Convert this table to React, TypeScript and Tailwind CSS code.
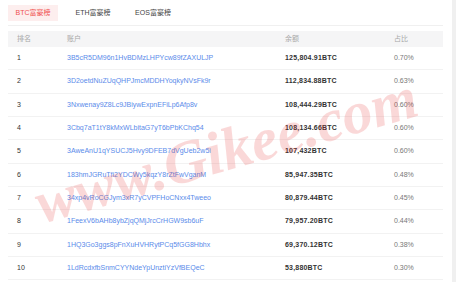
import clsx from "clsx";

const cn = clsx;

const rows = [
    { rank: 1, addr: "3B5cR5DM96n1HvBDMzLHPYcw89fZAXULJP", bal: "125,804.91BTC", pct: "0.70%" },
    { rank: 2, addr: "3D2oetdNuZUqQHPJmcMDDHYoqkyNVsFk9r", bal: "112,834.88BTC", pct: "0.63%" },
    { rank: 3, addr: "3Nxwenay9Z8Lc9JBiywExpnEFiLp6Afp8v", bal: "108,444.29BTC", pct: "0.60%" },
    { rank: 4, addr: "3Cbq7aT1tY8kMxWLbitaG7yT6bPbKChq54", bal: "108,134.66BTC", pct: "0.60%" },
    { rank: 5, addr: "3AweAnU1qYSUCJ5Hvy9DFEB7dVgUeb2w5i", bal: "107,432BTC", pct: "0.60%" },
    { rank: 6, addr: "183hmJGRuTfi2YDCWy5kqzY8rZtFwVganM", bal: "85,947.35BTC", pct: "0.48%" },
    { rank: 7, addr: "34xp4vRoCGJym3xR7yCVPFHoCNxx4Tweeo", bal: "80,879.44BTC", pct: "0.45%" },
    { rank: 8, addr: "1FeexV6bAHb8ybZjqQMjJrcCrHGW9sb6uF", bal: "79,957.20BTC", pct: "0.44%" },
    { rank: 9, addr: "1HQ3Go3ggs8pFnXuHVHRytPCq5fGG8Hbhx", bal: "69,370.12BTC", pct: "0.38%" },
    { rank: 10, addr: "1LdRcdxfbSnmCYYNdeYpUnztiYzVfBEQeC", bal: "53,880BTC", pct: "0.30%" },
];

const tabs = ["BTC富豪榜", "ETH富豪榜", "EOS富豪榜"];

// column widths: rank | account | balance | share
const cols = "grid grid-cols-[50px_218px_109px_1fr]";

export default function App() {
    return (
        <div
            className="relative flex h-[282px] w-[456px] overflow-hidden bg-white"
            style={{ fontFamily: '"Liberation Sans", "Noto Sans CJK SC", sans-serif' }}
        >
            <div className="flex-1 pl-2 pr-[9px]">
                {/* Tabs */}
                <div className="flex h-[26px] items-start gap-[10px] border-b border-[#f0f0f0] pt-[5px]">
                    {tabs.map((t, i) => (
                        <div
                            key={t}
                            className={cn(
                                "flex h-4 w-[50px] items-center justify-center text-[7px]",
                                i === 0 ? "bg-[#fdeeee] text-[#f0504f]" : "text-[#444]",
                            )}
                        >
                            {t}
                        </div>
                    ))}
                </div>

                {/* Table */}
                <div className="mt-[5px]">
                    <div className={cn(cols, "h-4 items-center bg-[#f5f5f6] text-[7px] text-[#a8a8a8]")}>
                        <div className="pl-[9px]">排名</div>
                        <div className="pl-[9px]">账户</div>
                        <div className="pl-[9px]">余额</div>
                        <div className="pl-[9px]">占比</div>
                    </div>
                    {rows.map((r) => (
                        <div
                            key={r.rank}
                            className={cn(cols, "h-[23.33px] items-center border-b border-[#f2f2f2] text-[7px]")}
                        >
                            <div className="pl-[9px] text-[#333]">{r.rank}</div>
                            <div className="pl-[9px] text-[#5a8bea]">{r.addr}</div>
                            <div className="pl-[9px] font-bold tracking-[0.2px] text-[#333]">{r.bal}</div>
                            <div className="pl-[9px] text-[#777]">{r.pct}</div>
                        </div>
                    ))}
                </div>
            </div>

            {/* scroll track */}
            <div className="w-[4px] bg-[#f0f0f0]" />

            {/* watermark */}
            <div
                className="pointer-events-none absolute left-[226px] top-[150px] -translate-x-1/2 -translate-y-1/2 rotate-[-16deg] whitespace-nowrap text-[60px] font-bold italic text-[#e8302f] opacity-[0.18]"
                style={{ fontFamily: '"Liberation Serif", serif' }}
            >
                www.Gikee.com
            </div>
        </div>
    );
}
